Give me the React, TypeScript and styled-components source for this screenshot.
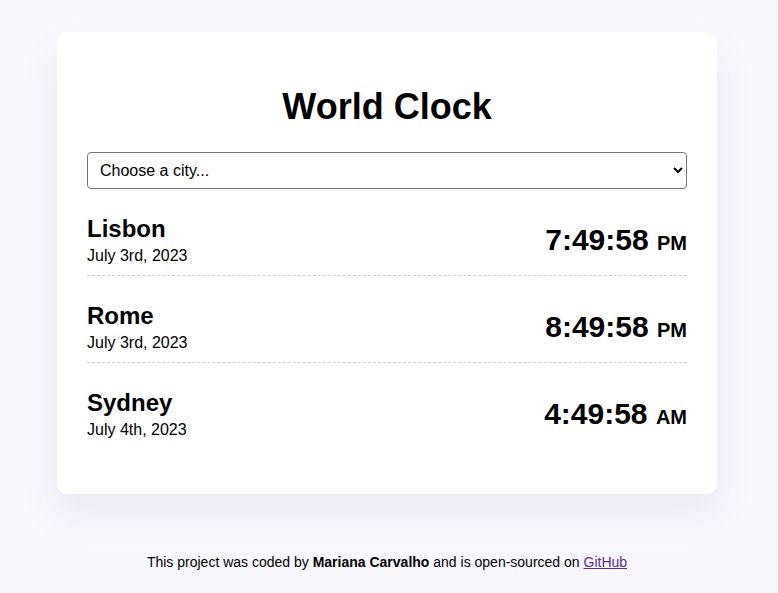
import React from "react";
import styled, { createGlobalStyle } from "styled-components";

const GlobalStyle = createGlobalStyle`
  html, body {
    margin: 0;
    padding: 0;
    background: #f8f7fd;
    font-family: "Liberation Sans", Arial, sans-serif;
    color: #000;
  }
`;

const Page = styled.div`
  padding: 32px 4px 0 0;
`;

const Card = styled.main`
  width: 660px;
  box-sizing: border-box;
  margin: 0 auto;
  background: #fff;
  border-radius: 10px;
  padding: 54px 30px 45px;
  box-shadow: 0 20px 40px rgba(90, 80, 140, 0.08);
`;

const Title = styled.h1`
  margin: 0 0 24px;
  text-align: center;
  font-size: 36px;
  font-weight: 700;
  line-height: 42px;
`;

const Select = styled.select`
  display: block;
  width: 100%;
  height: 37px;
  padding: 0 8px;
  font-family: "Liberation Sans", Arial, sans-serif;
  font-size: 16px;
  color: #000;
  background: #fff;
  border: 1px solid #767676;
  border-radius: 4px;
`;

const Row = styled.div<{ $last?: boolean }>`
  display: flex;
  justify-content: space-between;
  align-items: center;
  padding: 26px 0 10px;
  border-bottom: ${(p) => (p.$last ? "none" : "1px dashed #cfcfcf")};
`;

const City = styled.div``;

const CityName = styled.h2`
  margin: 0;
  font-size: 24px;
  font-weight: 700;
  line-height: 28px;
`;

const CityDate = styled.div`
  margin-top: 4px;
  font-size: 16px;
  line-height: 18px;
`;

const Time = styled.div`
  margin-top: 3px;
  font-size: 30px;
  font-weight: 700;
  line-height: 36px;
`;

const Meridiem = styled.small`
  font-size: 20px;
`;

const Footer = styled.footer`
  text-align: center;
  font-size: 14px;
  margin-top: 60px;
  a {
    color: #5a2d91;
  }
`;

const cities = [
  { name: "Lisbon", date: "July 3rd, 2023", time: "7:49:58", ampm: "PM" },
  { name: "Rome", date: "July 3rd, 2023", time: "8:49:58", ampm: "PM" },
  { name: "Sydney", date: "July 4th, 2023", time: "4:49:58", ampm: "AM" },
];

export default function App() {
  return (
    <Page>
      <GlobalStyle />
      <Card>
        <Title>World Clock</Title>
        <Select defaultValue="">
          <option value="">Choose a city...</option>
          <option value="current">My current location</option>
          <option value="Europe/Lisbon">Lisbon</option>
          <option value="Europe/Rome">Rome</option>
          <option value="Australia/Sydney">Sydney</option>
        </Select>
        {cities.map((c, i) => (
          <Row key={c.name} $last={i === cities.length - 1}>
            <City>
              <CityName>{c.name}</CityName>
              <CityDate>{c.date}</CityDate>
            </City>
            <Time>
              {c.time} <Meridiem>{c.ampm}</Meridiem>
            </Time>
          </Row>
        ))}
      </Card>
      <Footer>
        This project was coded by <strong>Mariana Carvalho</strong> and is
        open-sourced on <a href="#">GitHub</a>
      </Footer>
    </Page>
  );
}
